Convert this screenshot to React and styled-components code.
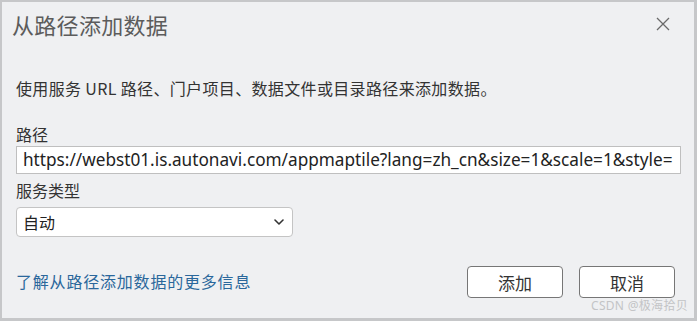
import React from 'react';
import styled, { createGlobalStyle } from 'styled-components';

const GlobalStyle = createGlobalStyle`
  html, body {
    margin: 0;
    padding: 0;
    background: #eff0f2;
  }
  body {
    font-family: "Noto Sans", "Noto Sans CJK SC", sans-serif;
  }
`;

const Dialog = styled.div`
  position: relative;
  box-sizing: border-box;
  width: 697px;
  height: 321px;
  display: flex;
  flex-direction: column;
  background: #eff0f2;
  border-style: solid;
  border-color: #c6c7c9;
  border-width: 2px 3px 3px 2px;
  color: #333;
`;

const Header = styled.div`
  height: 44px;
  display: flex;
  align-items: center;
  justify-content: space-between;
  padding: 0 22px 0 10px;
`;

const Title = styled.h1`
  margin: 0;
  font-size: 22px;
  font-weight: 400;
  color: #5c5c5c;
  font-family: "Noto Sans CJK SC", sans-serif;
  letter-spacing: 0.3px;
`;

const CloseButton = styled.button`
  width: 18px;
  height: 18px;
  padding: 0;
  border: none;
  background: none;
  display: flex;
  align-items: center;
  justify-content: center;
  color: #6a6a6a;
`;

const Body = styled.div`
  flex: 1;
  display: flex;
  flex-direction: column;
  padding: 0 13px 20px 14px;
`;

const Description = styled.p`
  margin: 32px 0 0;
  font-size: 16px;
  line-height: 20px;
  letter-spacing: 0.35px;
  font-family: "Noto Sans CJK SC", sans-serif;
  color: #333;
`;

const Label = styled.label`
  display: block;
  margin-top: ${(p) => p.$gap}px;
  font-size: 16px;
  line-height: 20px;
  font-family: "Noto Sans CJK SC", sans-serif;
  color: #333;
`;

const TextInput = styled.div`
  box-sizing: border-box;
  margin-top: 2px;
  width: 665px;
  height: 28px;
  padding: 0 0 0 6px;
  background: #fff;
  border: 1px solid #bfbfbf;
  font-family: "Noto Sans", sans-serif;
  font-size: 17.2px;
  line-height: 26px;
  color: #222;
  white-space: nowrap;
  overflow: hidden;
`;

const Select = styled.div`
  box-sizing: border-box;
  margin-top: 7px;
  width: 277px;
  height: 30px;
  display: flex;
  align-items: center;
  justify-content: space-between;
  padding: 0 8px 0 6px;
  background: #fff;
  border: 1px solid #c4c4c4;
  border-radius: 4px;
  font-size: 16px;
  font-family: "Noto Sans CJK SC", sans-serif;
  color: #222;
`;

const Footer = styled.div`
  margin-top: auto;
  display: flex;
  align-items: center;
  justify-content: space-between;
  padding-right: 6px;
`;

const HelpLink = styled.a`
  font-size: 16px;
  letter-spacing: 0.8px;
  font-family: "Noto Sans CJK SC", sans-serif;
  color: #2a679b;
  text-decoration: none;
  margin-top: -2px;
`;

const Buttons = styled.div`
  display: flex;
  gap: 16px;
`;

const Button = styled.button`
  box-sizing: border-box;
  width: 96px;
  height: 32px;
  background: #fff;
  border: 1.5px solid #767676;
  border-radius: 4px;
  font-size: 17px;
  font-family: "Noto Sans CJK SC", sans-serif;
  color: #333;
  padding: 0;
`;

const Watermark = styled.span`
  position: absolute;
  right: 6px;
  bottom: 4px;
  font-size: 12px;
  font-family: "Noto Sans", "Noto Sans CJK SC", sans-serif;
  color: #c3c4c6;
  letter-spacing: 0.3px;
`;

const Chevron = () => (
  <svg width="10" height="6" viewBox="0 0 10 6" fill="none">
    <path d="M1 1l4 4 4-4" stroke="#333" strokeWidth="1.6" strokeLinecap="round" strokeLinejoin="round" />
  </svg>
);

const CloseIcon = () => (
  <svg width="14" height="14" viewBox="0 0 14 14">
    <path d="M1 1l12 12M13 1L1 13" stroke="currentColor" strokeWidth="1.3" />
  </svg>
);

const App = () => {
  const url = 'https://webst01.is.autonavi.com/appmaptile?lang=zh_cn&size=1&scale=1&style=';

  return (
    <>
      <GlobalStyle />
      <Dialog>
        <Header>
          <Title>从路径添加数据</Title>
          <CloseButton aria-label="关闭">
            <CloseIcon />
          </CloseButton>
        </Header>
        <Body>
          <Description>使用服务 URL 路径、门户项目、数据文件或目录路径来添加数据。</Description>
          <Label $gap={26}>路径</Label>
          <TextInput>{url}</TextInput>
          <Label $gap={6}>服务类型</Label>
          <Select>
            <span>自动</span>
            <Chevron />
          </Select>
          <Footer>
            <HelpLink href="#">了解从路径添加数据的更多信息</HelpLink>
            <Buttons>
              <Button>添加</Button>
              <Button>取消</Button>
            </Buttons>
          </Footer>
        </Body>
        <Watermark>CSDN @极海拾贝</Watermark>
      </Dialog>
    </>
  );
};

export default App;
